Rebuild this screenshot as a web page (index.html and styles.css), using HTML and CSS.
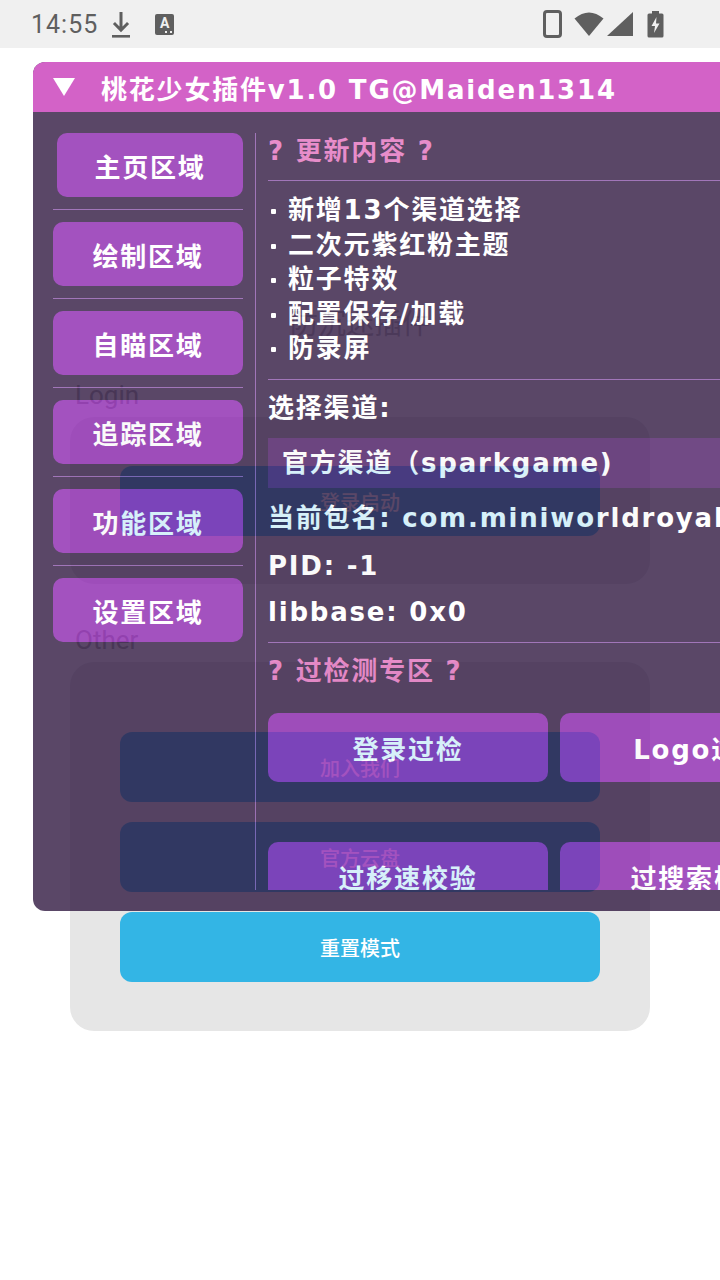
FILE: index.html
```html
<!DOCTYPE html>
<html lang="zh-CN">
<head>
    <meta charset="UTF-8">
    <meta name="viewport" content="width=device-width, initial-scale=1.0">
    <title>桃花少女插件</title>
    <link rel="stylesheet" href="styles.css">
</head>
<body>
    <!-- Android status bar -->
    <div class="statusbar">
        <div class="status-left">
            <span class="clock">14:55</span>
            <svg class="sb-download" width="22" height="28" viewBox="0 0 22 28">
                <path d="M9.5 1h3v14.5l4.5-4.5 2.1 2.1L11 21.2 2.9 13.1 5 11l4.5 4.5z" fill="#5f5f5f"/>
                <rect x="2" y="24" width="18" height="2.6" fill="#5f5f5f"/>
            </svg>
            <span class="app-badge">A<i></i></span>
        </div>
        <div class="status-right">
            <svg width="19" height="28" viewBox="0 0 19 28">
                <rect x="1.5" y="1.5" width="16" height="25" rx="2.5" fill="none" stroke="#5f5f5f" stroke-width="3"/>
            </svg>
            <svg width="30" height="26" viewBox="0 0 30 26">
                <path d="M0.5 7.5 Q15 -4.5 29.5 7.5 L15 25 Z" fill="#5f5f5f"/>
            </svg>
            <svg width="26" height="24" viewBox="0 0 26 24">
                <path d="M26 0 V24 H0 Z" fill="#5f5f5f"/>
            </svg>
            <svg width="17" height="27" viewBox="0 0 17 27">
                <rect x="5" y="0" width="7" height="3" fill="#5f5f5f"/>
                <rect x="0.5" y="2.5" width="16" height="24" rx="1.5" fill="#5f5f5f"/>
                <path d="M9.5 6 L4.5 15 H8 L7 22 L12.5 12.5 H9 Z" fill="#f0f0f0"/>
            </svg>
        </div>
    </div>

    <!-- Launcher page -->
    <div class="app">
        <div class="app-title">防沉迷插件</div>

        <div class="section-label">Login</div>
        <div class="card">
            <div class="blue-btn">登录启动</div>
        </div>

        <div class="section-label section-other">Other</div>
        <div class="card card-other">
            <div class="blue-btn">加入我们</div>
            <div class="blue-btn">官方云盘</div>
            <div class="blue-btn">重置模式</div>
        </div>
    </div>

    <!-- Floating menu window -->
    <div class="window">
        <div class="titlebar">
            <svg width="22" height="18" viewBox="0 0 22 18">
                <path d="M0 0 H22 L11 18 Z" fill="#fff"/>
            </svg>
            <span>桃花少女插件v1.0 TG@Maiden1314</span>
        </div>
        <div class="window-body">
            <div class="side">
                <div class="tab tab-active">主页区域</div>
                <div class="tab-sep"></div>
                <div class="tab">绘制区域</div>
                <div class="tab-sep"></div>
                <div class="tab">自瞄区域</div>
                <div class="tab-sep"></div>
                <div class="tab">追踪区域</div>
                <div class="tab-sep"></div>
                <div class="tab">功能区域</div>
                <div class="tab-sep"></div>
                <div class="tab">设置区域</div>
            </div>
            <div class="divider"></div>
            <div class="content">
                <div class="heading">? 更新内容 ?</div>
                <div class="sep sep-top"></div>
                <ul class="changes">
                    <li>新增13个渠道选择</li>
                    <li>二次元紫红粉主题</li>
                    <li>粒子特效</li>
                    <li>配置保存/加载</li>
                    <li>防录屏</li>
                </ul>
                <div class="sep sep-mid"></div>
                <div class="line line-label">选择渠道:</div>
                <div class="combo">官方渠道（sparkgame)</div>
                <div class="line line-pkg">当前包名: com.miniworldroyale.sparkgame</div>
                <div class="line line-pid">PID: -1</div>
                <div class="line line-base">libbase: 0x0</div>
                <div class="sep sep-mid"></div>
                <div class="heading heading-bypass">? 过检测专区 ?</div>
                <div class="bypass-grid">
                    <div class="tab">登录过检</div>
                    <div class="tab">Logo过检</div>
                    <div class="tab">过移速校验</div>
                    <div class="tab">过搜索检测</div>
                </div>
            </div>
        </div>
    </div>
</body>
</html>
```

FILE: styles.css
```css
/* Basic Reset */
* {
    box-sizing: border-box;
}

html, body {
    margin: 0;
    padding: 0;
}

body {
    width: 720px;
    height: 1280px;
    overflow: hidden;
    position: relative;
    background-color: #fff;
    font-family: Roboto, "Noto Sans CJK SC", sans-serif;
}

/* Status Bar */
.statusbar {
    height: 48px;
    background-color: #f0f0f0;
    display: flex;
    align-items: center;
    justify-content: space-between;
    padding: 0 56px 0 31px;
    color: #5f5f5f;
}

.status-left,
.status-right {
    display: flex;
    align-items: center;
}

.clock {
    font-size: 25px;
    letter-spacing: 1px;
}

.sb-download {
    margin-left: 12px;
    margin-top: 2px;
}

.app-badge {
    position: relative;
    width: 19px;
    height: 21px;
    margin-left: 23px;
    border-radius: 2px;
    background-color: #5f5f5f;
    color: #f0f0f0;
    font-size: 14px;
    font-weight: bold;
    line-height: 19px;
    text-align: center;
}

.app-badge i {
    position: absolute;
    right: 2px;
    bottom: 2px;
    width: 7px;
    height: 2px;
    border-left: 2px dotted #f0f0f0;
    border-right: 2px dotted #f0f0f0;
}

.status-right svg {
    margin-left: 12px;
}

.status-right svg:nth-child(3) {
    margin-left: 3px;
}

.status-right svg:last-child {
    margin-left: 14px;
}

/* Launcher Page */
.app {
    padding: 0 70px;
}

.app-title {
    margin-top: 257px;
    height: 40px;
    line-height: 40px;
    text-align: center;
    font-size: 28px;
    color: #b8b8b8;
}

.section-label {
    margin: 35px 0 7px 5px;
    font-size: 26px;
    line-height: 30px;
    color: #a8a8a8;
}

.section-other {
    margin-top: 41px;
}

.card {
    background-color: #e6e6e6;
    border-radius: 24px;
    padding: 49px 50px 48px;
    display: flex;
    flex-direction: column;
    gap: 20px;
}

.card-other {
    padding-top: 70px;
    padding-bottom: 49px;
}

.blue-btn {
    height: 70px;
    background-color: #33b5e5;
    border-radius: 12px;
    color: #fff;
    font-size: 20px;
    font-weight: 500;
    display: flex;
    align-items: center;
    justify-content: center;
}

/* Floating Menu Window */
.window {
    position: absolute;
    left: 33px;
    top: 62px;
    width: 687px;
    height: 849px;
    border-radius: 12px 0 0 12px;
    overflow: hidden;
    opacity: 0.8;
    background-color: #311a42;
    color: #fff;
    font-family: "DejaVu Sans", "Noto Sans CJK SC", sans-serif;
    font-weight: bold;
    font-size: 26px;
    letter-spacing: 1.8px;
}

.titlebar {
    height: 50px;
    background-color: #c93bba;
    display: flex;
    align-items: center;
    padding-left: 20px;
}

.titlebar svg {
    margin-right: 26px;
    flex: none;
}

.titlebar span {
    white-space: nowrap;
}

.window-body {
    display: flex;
    height: 799px;
    padding: 21px 0 21px 20px;
}

.side {
    width: 190px;
    flex: none;
    overflow: hidden;
}

.divider {
    width: 1px;
    flex: none;
    margin: 0 12px;
    background-color: #8a55a8;
}

.content {
    width: 540px;
    flex: none;
    overflow: hidden;
}

/* Buttons */
.tab {
    height: 64px;
    border-radius: 10px;
    background-color: #8d28b0;
    display: flex;
    align-items: center;
    justify-content: center;
    white-space: nowrap;
}

.tab-active {
    margin-left: 4px;
}

.tab-sep {
    height: 1px;
    margin: 12px 0;
    background-color: #8a55a8;
}

/* Content Column */
.heading {
    height: 36px;
    line-height: 36px;
    color: #e271be;
}

.heading-bypass {
    margin-top: 10px;
}

.sep {
    height: 1px;
    background-color: #8a55a8;
}

.sep-top {
    margin-top: 11px;
}

.sep-mid {
    margin-top: 13px;
}

.changes {
    list-style: none;
    margin: 12px 0 0;
    padding: 0;
}

.changes li {
    position: relative;
    height: 34.6px;
    line-height: 34.6px;
    padding-left: 20px;
}

.changes li::before {
    content: "";
    position: absolute;
    left: 3px;
    top: 16px;
    width: 5px;
    height: 5px;
    border-radius: 1px;
    background-color: #fff;
}

.line {
    height: 34px;
    line-height: 34px;
    white-space: nowrap;
}

.line-label {
    margin-top: 11px;
}

.line-pkg {
    margin-top: 13px;
}

.line-pid {
    margin-top: 14px;
}

.line-base {
    margin-top: 12px;
}

.combo {
    margin-top: 13px;
    height: 50px;
    line-height: 50px;
    padding-left: 14px;
    background-color: #4e1d67;
    white-space: nowrap;
}

.bypass-grid {
    margin-top: 24px;
    display: grid;
    grid-template-columns: 280px 280px;
    column-gap: 12px;
    row-gap: 60px;
}

.bypass-grid .tab {
    height: 69px;
}
```
